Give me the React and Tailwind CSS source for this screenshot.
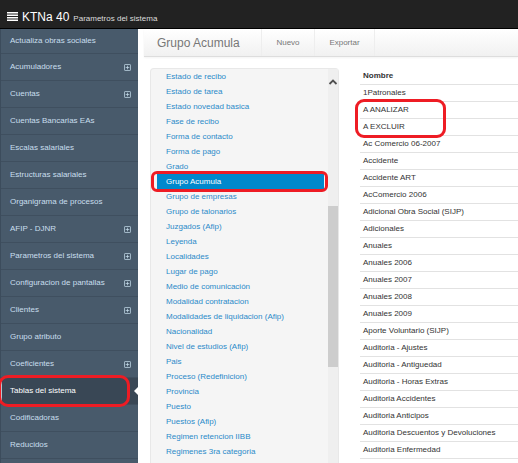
import clsx from "clsx";

const menuItems = [
  { label: "Actualiza obras sociales" },
  { label: "Acumuladores", expandable: true },
  { label: "Cuentas", expandable: true },
  { label: "Cuentas Bancarias EAs" },
  { label: "Escalas salariales" },
  { label: "Estructuras salariales" },
  { label: "Organigrama de procesos" },
  { label: "AFIP - DJNR", expandable: true },
  { label: "Parametros del sistema", expandable: true },
  { label: "Configuracion de pantallas", expandable: true },
  { label: "Clientes", expandable: true },
  { label: "Grupo atributo" },
  { label: "Coeficientes", expandable: true },
  { label: "Tablas del sistema", active: true },
  { label: "Codificadoras" },
  { label: "Reducidos" },
];

const tables = [
  "Estado de recibo",
  "Estado de tarea",
  "Estado novedad basica",
  "Fase de recibo",
  "Forma de contacto",
  "Forma de pago",
  "Grado",
  "Grupo Acumula",
  "Grupo de empresas",
  "Grupo de talonarios",
  "Juzgados (Afip)",
  "Leyenda",
  "Localidades",
  "Lugar de pago",
  "Medio de comunicación",
  "Modalidad contratacion",
  "Modalidades de liquidacion (Afip)",
  "Nacionalidad",
  "Nivel de estudios (Afip)",
  "Pais",
  "Proceso (Redefinicion)",
  "Provincia",
  "Puesto",
  "Puestos (Afip)",
  "Regimen retencion IIBB",
  "Regimenes 3ra categoria",
];

const rows = [
  "1Patronales",
  "A ANALIZAR",
  "A EXCLUIR",
  "Ac Comercio 06-2007",
  "Accidente",
  "Accidente ART",
  "AcComercio 2006",
  "Adicional Obra Social (SIJP)",
  "Adicionales",
  "Anuales",
  "Anuales 2006",
  "Anuales 2007",
  "Anuales 2008",
  "Anuales 2009",
  "Aporte Voluntario (SIJP)",
  "Auditoria - Ajustes",
  "Auditoria - Antiguedad",
  "Auditoria - Horas Extras",
  "Auditoria Accidentes",
  "Auditoria Anticipos",
  "Auditoria Descuentos y Devoluciones",
  "Auditoria Enfermedad",
  "Auditoria Feriados",
];

const Header = () => (
  <header className="flex h-[29px] shrink-0 items-end gap-1 border-b border-black bg-[#222] px-[7px] text-white">
    <button type="button" aria-label="Menu" className="pb-[7px]">
      <svg width="11" height="9" viewBox="0 0 11 9" fill="currentColor">
        <path d="M0 0h11v1.5H0zM0 2.5h11V4H0zM0 5h11v1.5H0zM0 7.5h11V9H0z" />
      </svg>
    </button>
    <h1 className="flex items-baseline gap-1 pb-px text-[12px] leading-4">
      KTNa 40
      <small className="text-[8px] text-[#ddd]">Parametros del sistema</small>
    </h1>
  </header>
);

const Sidebar = () => (
  <nav className="w-[138px] shrink-0 border-l border-[#3c4c5c] bg-[#485a6b]">
    <ul>
      {menuItems.map((item) => (
        <li
          key={item.label}
          className="relative h-[27px] border-b border-[#3f4f5f] first:h-[25px]"
        >
          <a
            href="#"
            className={clsx(
              "flex h-full items-center justify-between pr-[7px]",
              item.active
                ? "border-l border-[#b8c4ce] bg-[#394755] pl-2 text-white"
                : "pl-[9px] text-[#c9dfee]"
            )}
          >
            {item.label}
            {item.expandable && (
              <svg
                width="7"
                height="7"
                viewBox="0 0 7 7"
                fill="none"
                stroke="currentColor"
                strokeWidth=".7"
              >
                <rect x=".5" y=".5" width="6" height="6" rx=".6" />
                <path d="M1.7 3.5h3.6M3.5 1.7v3.6" />
              </svg>
            )}
          </a>
          {item.active && (
            <>
              <svg
                className="absolute top-[9px] right-0"
                width="4"
                height="8"
                viewBox="0 0 4 8"
              >
                <path d="M4 0v8L0 4z" fill="#fff" />
              </svg>
              <span className="absolute -top-[3px] right-2 -bottom-[3px] -left-[3px] rounded-[10px] border-3 border-[#ee1c24]" />
            </>
          )}
        </li>
      ))}
    </ul>
  </nav>
);

const Toolbar = () => (
  <div className="flex h-[28px] shrink-0 items-stretch border-b border-[#ddd] bg-linear-to-b from-white to-[#f1f1f1] text-[#777] shadow-xs">
    <h2 className="flex w-[118px] items-center border-r border-[#eee] pl-[13px] text-[12px]">
      Grupo Acumula
    </h2>
    <button type="button" className="w-[53px] border-r border-[#eee]">
      Nuevo
    </button>
    <button type="button" className="w-[60px] border-r border-[#eee]">
      Exportar
    </button>
  </div>
);

const TableList = () => (
  <div className="flex w-[189px] shrink-0 rounded-t-sm border border-b-0 border-[#e8e8e8] bg-[#f5f5f5]">
    <ul className="flex-1 pl-[6px]">
      {tables.map((name) => {
        const selected = name === "Grupo Acumula";
        return (
          <li key={name} className="relative">
            <a
              href="#"
              className={clsx(
                "mr-1 block h-[15px] pl-[9px] leading-[15px]",
                selected ? "bg-[#0088cc] text-white" : "text-[#2b8ac9]"
              )}
            >
              {name}
            </a>
            {selected && (
              <span className="absolute -inset-y-[3px] right-0 -left-[6px] rounded-[6px] border-3 border-[#ee1c24]" />
            )}
          </li>
        );
      })}
    </ul>
    <div className="w-[10px] bg-[#efefef] pt-[10px]">
      <svg
        width="10"
        height="6"
        viewBox="0 0 10 6"
        fill="none"
        stroke="#505050"
        strokeWidth="1.8"
      >
        <path d="M1.5 5 5 1.6 8.5 5" />
      </svg>
      <div className="mt-[121px] h-[161px] bg-[#cdcdcd]" />
    </div>
  </div>
);

const Results = () => (
  <div className="min-w-0 flex-1">
    <table className="w-full border-collapse text-left text-[#333]">
      <thead>
        <tr className="h-4 border-b border-[#e2e2e2]">
          <th className="p-0 pl-[3px] font-bold">Nombre</th>
        </tr>
      </thead>
      <tbody>
        {rows.map((name) => (
          <tr key={name} className="h-[17px] border-b border-[#e2e2e2]">
            <td className="relative p-0 pl-[3px]">
              {name}
              {name === "A ANALIZAR" && (
                <span className="absolute -top-[3px] -left-[5px] h-[39px] w-[91px] rounded-[9px] border-3 border-[#ee1c24]" />
              )}
            </td>
          </tr>
        ))}
      </tbody>
    </table>
  </div>
);

export default function App() {
  return (
    <div className="flex h-screen flex-col overflow-hidden bg-white font-['Liberation_Sans',sans-serif] text-[8px] leading-3">
      <Header />
      <div className="flex min-h-0 flex-1">
        <Sidebar />
        <main className="flex min-w-0 flex-1 flex-col pl-[6px]">
          <Toolbar />
          <div className="flex min-h-0 flex-1 gap-[21px] pt-[11px] pl-[6px]">
            <TableList />
            <Results />
          </div>
        </main>
      </div>
    </div>
  );
}
